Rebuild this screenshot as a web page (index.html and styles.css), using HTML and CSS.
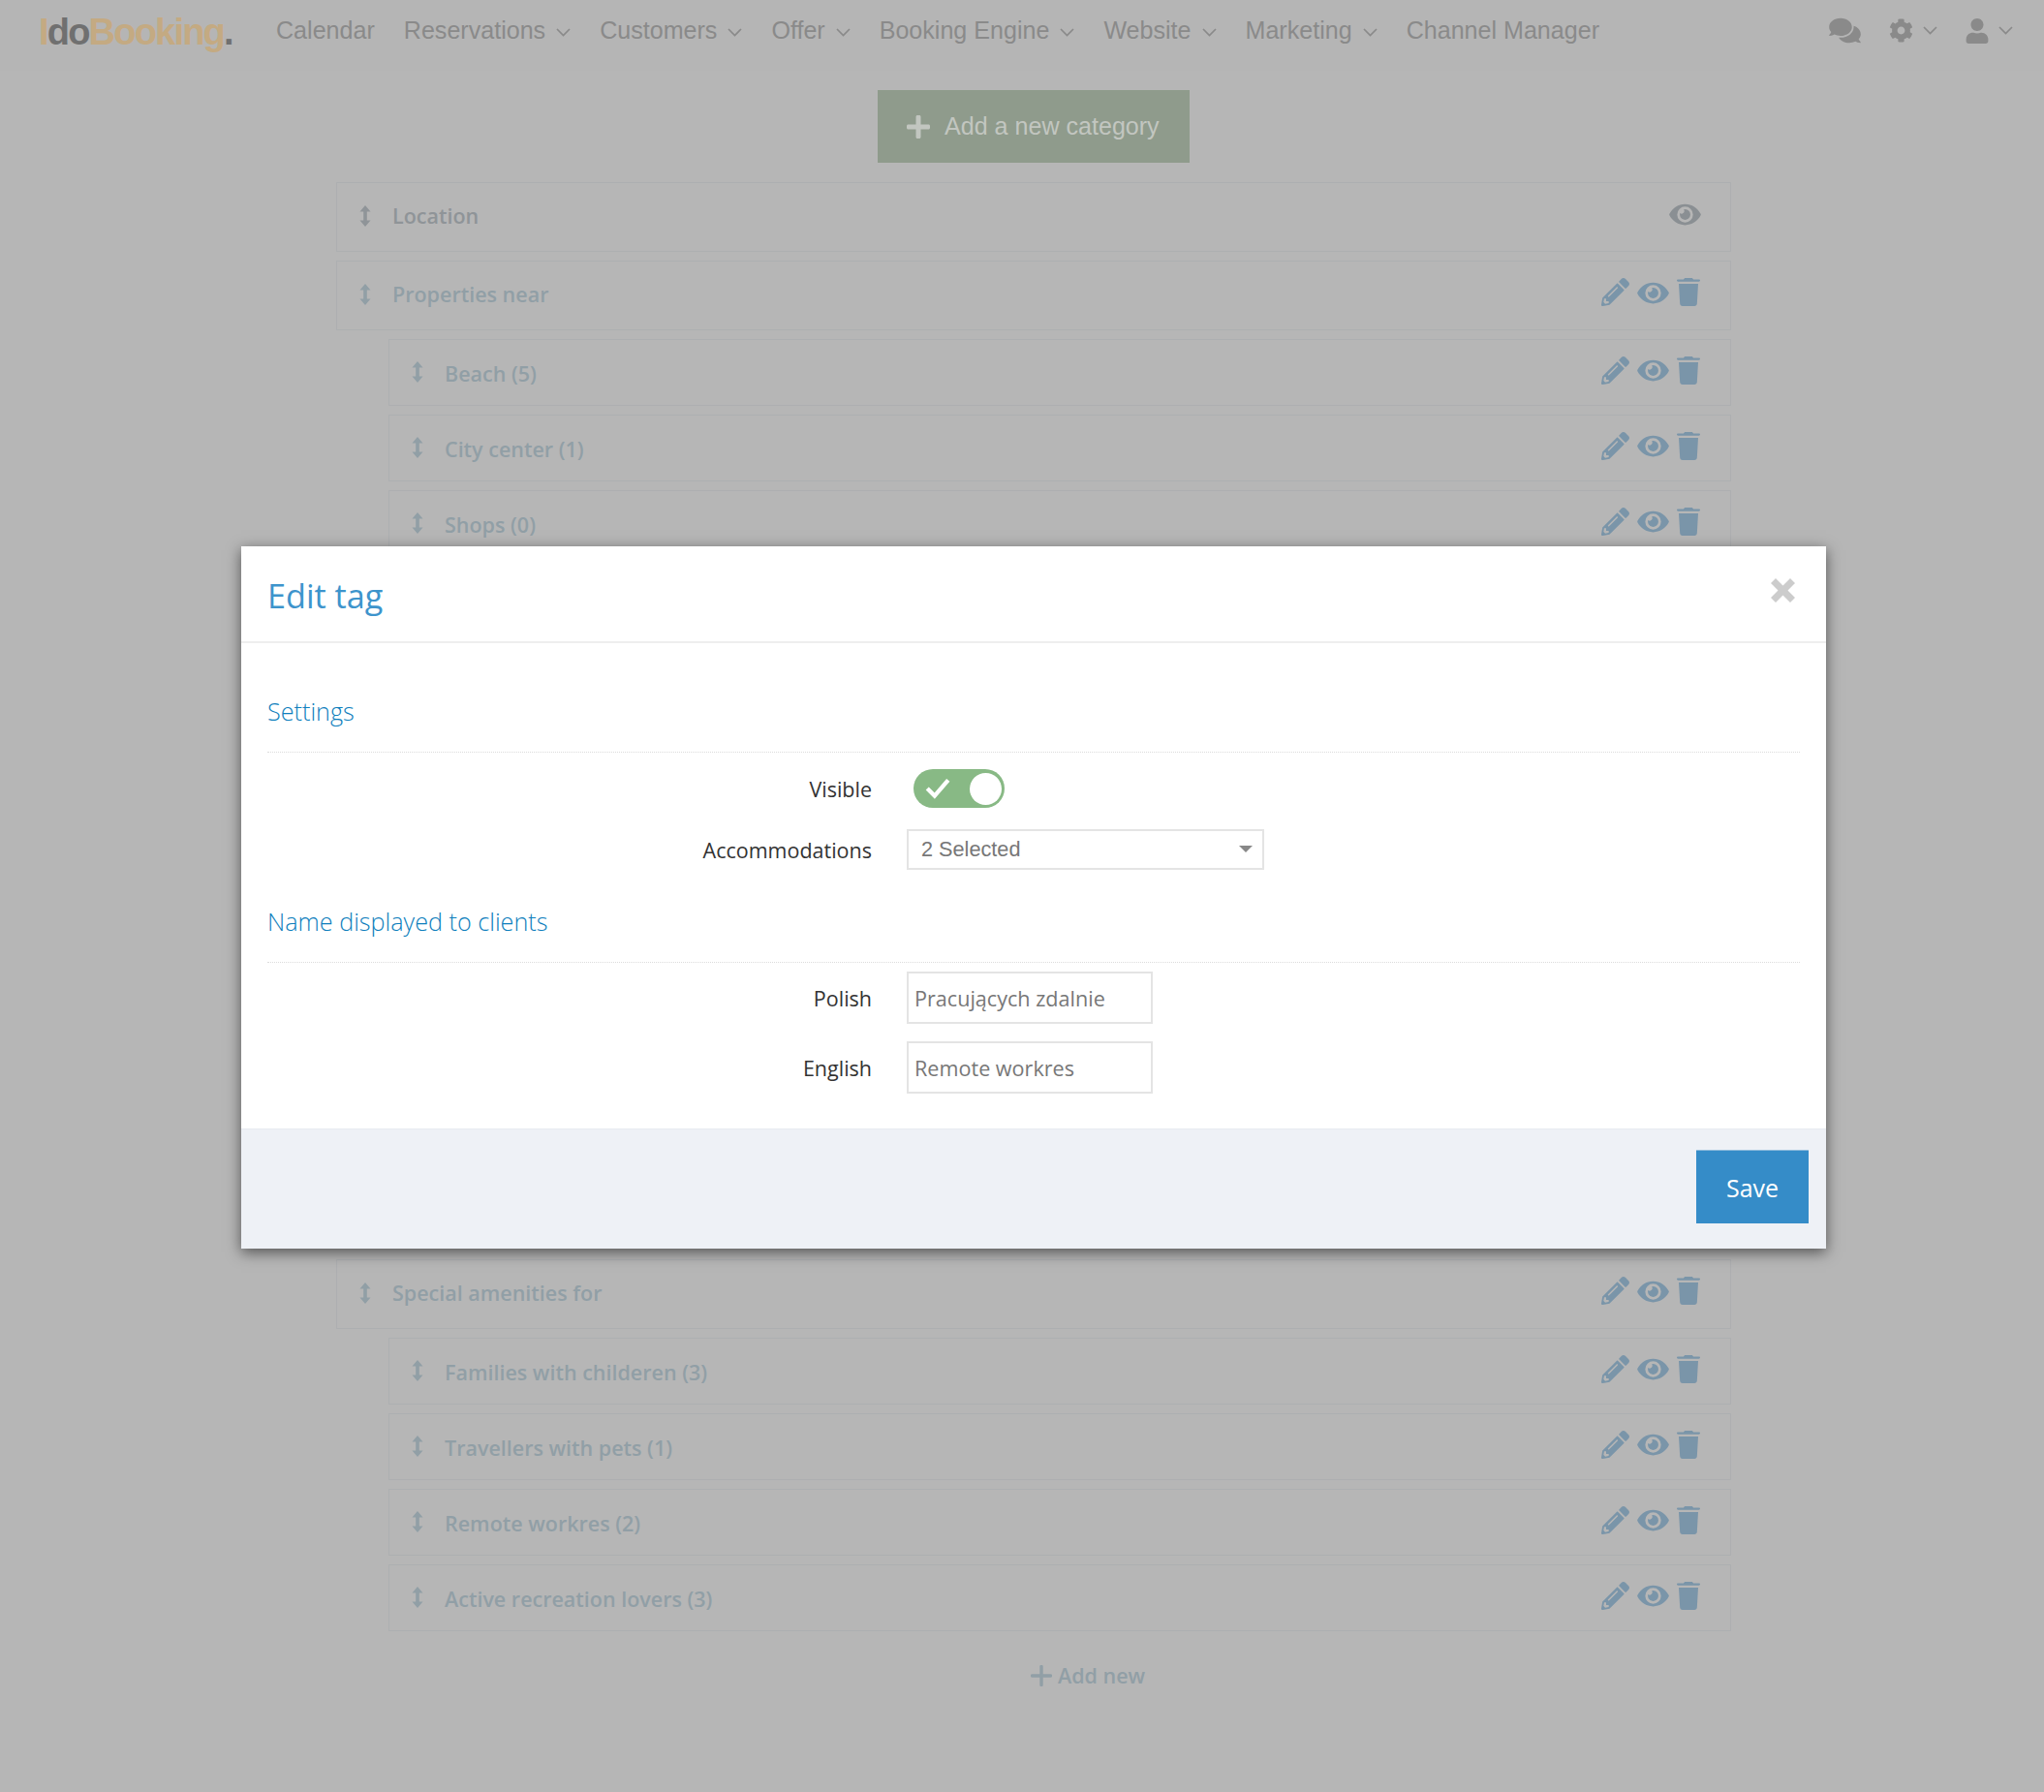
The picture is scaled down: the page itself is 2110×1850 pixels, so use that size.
FILE: index.html
```html
<!DOCTYPE html>
<html>
	<head>
		<meta charset="UTF-8"/>
		<title>IdoBooking - Tags</title>
		<link rel="stylesheet" href="styles.css">
	</head>
	<body>
		<svg class="Sprites" width="0" height="0">
			<symbol id="i-pencil" viewBox="0 0 512 512"><path d="M497.9 142.1l-46.1 46.1c-4.7 4.7-12.3 4.7-17 0l-111-111c-4.7-4.7-4.7-12.3 0-17l46.1-46.1c18.7-18.7 49.1-18.7 67.9 0l60.1 60.1c18.8 18.7 18.8 49.1 0 67.9zM284.2 99.8L21.6 362.4.4 483.9c-2.9 16.4 11.4 30.6 27.8 27.8l121.5-21.3 262.6-262.6c4.7-4.7 4.7-12.3 0-17l-111-111c-4.8-4.7-12.4-4.7-17.1 0zM124.1 339.9c-5.5-5.5-5.5-14.3 0-19.8l154-154c5.5-5.5 14.3-5.5 19.8 0s5.5 14.3 0 19.8l-154 154c-5.5 5.5-14.3 5.5-19.8 0zM88 424h48v36.3l-64.5 11.3-31.1-31.1L51.7 376H88v48z"/></symbol>
			<symbol id="i-eye" viewBox="0 0 576 512"><path d="M572.52 241.4C518.29 135.59 410.93 64 288 64S57.68 135.64 3.48 241.41a32.35 32.35 0 0 0 0 29.19C57.71 376.41 165.07 448 288 448s230.32-71.64 284.52-177.41a32.35 32.35 0 0 0 0-29.19zM288 400a144 144 0 1 1 144-144 143.93 143.93 0 0 1-144 144zm0-240a95.31 95.31 0 0 0-25.31 3.79 47.85 47.85 0 0 1-66.9 66.9A95.78 95.78 0 1 0 288 160z"/></symbol>
			<symbol id="i-trash" viewBox="0 0 24 29"><path d="M9 0h6c1 0 1.700.6 2 1.500h5.800c.7 0 1.200.5 1.200 1.100s-.5 1.100-1.200 1.100H1.200C.5 3.700 0 3.200 0 2.600s.5-1.100 1.200-1.100H7C7.300.6 8 0 9 0zM2 6h20l-1.200 20.500c-.1 1.400-1.200 2.500-2.600 2.500H5.800c-1.400 0-2.500-1.100-2.600-2.500z"/></symbol>
			<symbol id="i-drag" viewBox="0 0 12 22"><path d="M6 0l5.500 6.500H7.800v9h3.700L6 22 .5 15.500h3.700v-9H.5z"/></symbol>
			<symbol id="i-plus" viewBox="0 0 24 24"><path d="M9.500 1.500C9.500.7 10.200 0 11 0h2c.8 0 1.500.7 1.500 1.500v8h8c.8 0 1.500.7 1.500 1.500v2c0 .8-.7 1.500-1.500 1.500h-8v8c0 .8-.7 1.500-1.500 1.500h-2c-.8 0-1.500-.7-1.500-1.500v-8h-8C.7 14.500 0 13.800 0 13v-2c0-.8.7-1.500 1.500-1.500h8z"/></symbol>
			<symbol id="i-plus-thin" viewBox="0 0 22 22"><path d="M11 1.500v19M1.500 11h19" fill="none" stroke="currentColor" stroke-width="3.400" stroke-linecap="round"/></symbol>
			<symbol id="i-chevron" viewBox="0 0 15 9"><path d="M1 1l6.500 6.500L14 1" fill="none" stroke="currentColor" stroke-width="1.700"/></symbol>
			<symbol id="i-comments" viewBox="0 0 576 512"><path d="M416 192c0-88.4-93.1-160-208-160S0 103.6 0 192c0 34.3 14.1 65.9 38 92-13.4 30.2-35.500 54.200-35.800 54.500-2.200 2.300-2.800 5.700-1.500 8.700S4.800 352 8 352c36.600 0 66.900-12.300 88.700-25 32.200 15.700 70.300 25 111.300 25 114.900 0 208-71.600 208-160zm122 220c23.900-26 38-57.700 38-92 0-66.900-53.500-124.200-129.300-148.100.9 6.600 1.300 13.300 1.300 20.100 0 105.900-107.700 192-240 192-10.800 0-21.300-.8-31.700-1.900C207.800 439.600 281.800 480 368 480c41 0 79.100-9.200 111.300-25 21.800 12.700 52.100 25 88.700 25 3.200 0 6.100-1.900 7.300-4.800 1.300-2.900.7-6.300-1.500-8.700-.3-.3-22.400-24.200-35.800-54.500z"/></symbol>
			<symbol id="i-cog" viewBox="0 0 512 512"><path d="M487.4 315.700l-42.600-24.600c4.300-23.200 4.300-47 0-70.200l42.600-24.600c4.900-2.800 7.100-8.600 5.500-14-11.100-35.600-30-67.800-54.700-94.600-3.800-4.100-10-5.100-14.800-2.300L380.800 110c-17.900-15.400-38.500-27.300-60.800-35.100V25.800c0-5.600-3.900-10.500-9.400-11.700-36.700-8.200-74.300-7.800-109.200 0-5.500 1.200-9.400 6.100-9.400 11.700V75c-22.200 7.900-42.800 19.800-60.800 35.100L88.700 85.500c-4.900-2.800-11-1.900-14.800 2.300-24.700 26.700-43.600 58.900-54.700 94.600-1.700 5.400.6 11.200 5.500 14L67.300 221c-4.300 23.200-4.300 47 0 70.200l-42.600 24.600c-4.900 2.800-7.100 8.600-5.500 14 11.100 35.600 30 67.800 54.700 94.600 3.800 4.100 10 5.100 14.800 2.300l42.600-24.600c17.900 15.400 38.500 27.300 60.800 35.100v49.200c0 5.600 3.900 10.500 9.400 11.700 36.700 8.200 74.300 7.800 109.200 0 5.500-1.200 9.400-6.100 9.400-11.700v-49.200c22.200-7.900 42.800-19.800 60.800-35.100l42.600 24.600c4.900 2.800 11 1.900 14.800-2.300 24.700-26.700 43.600-58.900 54.700-94.600 1.500-5.500-.7-11.300-5.600-14.100zM256 336c-44.100 0-80-35.900-80-80s35.900-80 80-80 80 35.900 80 80-35.900 80-80 80z"/></symbol>
			<symbol id="i-user" viewBox="0 0 448 512"><path d="M224 256c70.700 0 128-57.300 128-128S294.700 0 224 0 96 57.300 96 128s57.300 128 128 128zm89.600 32h-16.700c-22.200 10.200-46.900 16-72.900 16s-50.600-5.800-72.900-16h-16.700C60.200 288 0 348.200 0 422.400V464c0 26.500 21.500 48 48 48h352c26.500 0 48-21.500 48-48v-41.600c0-74.200-60.200-134.400-134.400-134.400z"/></symbol>
		</svg>

		<header class="Topbar">
			<a class="Logo">I<span class="LogoDark">do</span>Booking<span class="LogoDark">.</span></a>
			<nav class="Menu">
				<span class="MenuItem">Calendar</span>
				<span class="MenuItem">Reservations <svg class="Chevron"><use href="#i-chevron"/></svg></span>
				<span class="MenuItem">Customers <svg class="Chevron"><use href="#i-chevron"/></svg></span>
				<span class="MenuItem">Offer <svg class="Chevron"><use href="#i-chevron"/></svg></span>
				<span class="MenuItem">Booking Engine <svg class="Chevron"><use href="#i-chevron"/></svg></span>
				<span class="MenuItem">Website <svg class="Chevron"><use href="#i-chevron"/></svg></span>
				<span class="MenuItem">Marketing <svg class="Chevron"><use href="#i-chevron"/></svg></span>
				<span class="MenuItem">Channel Manager</span>
			</nav>
			<div class="TopIcons">
				<svg class="TopComments"><use href="#i-comments"/></svg>
				<span class="TopIcon"><svg class="TopCog"><use href="#i-cog"/></svg><svg class="Chevron"><use href="#i-chevron"/></svg></span>
				<span class="TopIcon"><svg class="TopUser"><use href="#i-user"/></svg><svg class="Chevron"><use href="#i-chevron"/></svg></span>
			</div>
		</header>

		<main class="Content">
			<div class="AddCategory"><span class="AddButton"><svg class="AddPlus"><use href="#i-plus"/></svg>Add a new category</span></div>
			<div class="Rows">
				<div class="Row Main Muted">
					<svg class="Drag"><use href="#i-drag"/></svg><span class="RowName">Location</span>
					<span class="RowIcons"><svg class="IconEye LocationEye"><use href="#i-eye"/></svg></span>
				</div>
				<div class="Row Main">
					<svg class="Drag"><use href="#i-drag"/></svg><span class="RowName">Properties near</span>
					<span class="RowIcons"><svg class="IconPencil"><use href="#i-pencil"/></svg><svg class="IconEye"><use href="#i-eye"/></svg><svg class="IconTrash"><use href="#i-trash"/></svg></span>
				</div>
				<div class="Row Sub">
					<svg class="Drag"><use href="#i-drag"/></svg><span class="RowName">Beach (5)</span>
					<span class="RowIcons"><svg class="IconPencil"><use href="#i-pencil"/></svg><svg class="IconEye"><use href="#i-eye"/></svg><svg class="IconTrash"><use href="#i-trash"/></svg></span>
				</div>
				<div class="Row Sub">
					<svg class="Drag"><use href="#i-drag"/></svg><span class="RowName">City center (1)</span>
					<span class="RowIcons"><svg class="IconPencil"><use href="#i-pencil"/></svg><svg class="IconEye"><use href="#i-eye"/></svg><svg class="IconTrash"><use href="#i-trash"/></svg></span>
				</div>
				<div class="Row Sub">
					<svg class="Drag"><use href="#i-drag"/></svg><span class="RowName">Shops (0)</span>
					<span class="RowIcons"><svg class="IconPencil"><use href="#i-pencil"/></svg><svg class="IconEye"><use href="#i-eye"/></svg><svg class="IconTrash"><use href="#i-trash"/></svg></span>
				</div>
				<div class="Covered"></div>
				<div class="Row Main">
					<svg class="Drag"><use href="#i-drag"/></svg><span class="RowName">Special amenities for</span>
					<span class="RowIcons"><svg class="IconPencil"><use href="#i-pencil"/></svg><svg class="IconEye"><use href="#i-eye"/></svg><svg class="IconTrash"><use href="#i-trash"/></svg></span>
				</div>
				<div class="Row Sub">
					<svg class="Drag"><use href="#i-drag"/></svg><span class="RowName">Families with childeren (3)</span>
					<span class="RowIcons"><svg class="IconPencil"><use href="#i-pencil"/></svg><svg class="IconEye"><use href="#i-eye"/></svg><svg class="IconTrash"><use href="#i-trash"/></svg></span>
				</div>
				<div class="Row Sub">
					<svg class="Drag"><use href="#i-drag"/></svg><span class="RowName">Travellers with pets (1)</span>
					<span class="RowIcons"><svg class="IconPencil"><use href="#i-pencil"/></svg><svg class="IconEye"><use href="#i-eye"/></svg><svg class="IconTrash"><use href="#i-trash"/></svg></span>
				</div>
				<div class="Row Sub">
					<svg class="Drag"><use href="#i-drag"/></svg><span class="RowName">Remote workres (2)</span>
					<span class="RowIcons"><svg class="IconPencil"><use href="#i-pencil"/></svg><svg class="IconEye"><use href="#i-eye"/></svg><svg class="IconTrash"><use href="#i-trash"/></svg></span>
				</div>
				<div class="Row Sub">
					<svg class="Drag"><use href="#i-drag"/></svg><span class="RowName">Active recreation lovers (3)</span>
					<span class="RowIcons"><svg class="IconPencil"><use href="#i-pencil"/></svg><svg class="IconEye"><use href="#i-eye"/></svg><svg class="IconTrash"><use href="#i-trash"/></svg></span>
				</div>
			</div>
			<div class="AddNew"><svg class="AddNewPlus"><use href="#i-plus-thin"/></svg>Add new</div>
		</main>

		<div class="Modal">
			<div class="ModalHead">
				<h2 class="ModalTitle">Edit tag</h2>
				<svg class="ModalClose" viewBox="0 0 25 25"><path d="M5 0l7.500 7.500L20 0l5 5-7.500 7.500L25 20l-5 5-7.500-7.500L5 25l-5-5 7.500-7.500L0 5z"/></svg>
			</div>
			<div class="ModalBody">
				<h3 class="Section">Settings</h3>
				<div class="Field FieldToggle">
					<label class="FieldLabel">Visible</label>
					<div class="Toggle">
						<svg class="ToggleCheck" viewBox="0 0 26 21"><path d="M3 11l7 7L23 3" fill="none" stroke="#fff" stroke-width="4"/></svg>
						<span class="ToggleKnob"></span>
					</div>
				</div>
				<div class="Field FieldSelect">
					<label class="FieldLabel">Accommodations</label>
					<div class="Select">2 Selected<span class="SelectCaret"></span></div>
				</div>
				<h3 class="Section SectionNext">Name displayed to clients</h3>
				<div class="Field FieldPolish">
					<label class="FieldLabel">Polish</label>
					<input class="TextInput" type="text" value="Pracujących zdalnie" readonly>
				</div>
				<div class="Field FieldEnglish">
					<label class="FieldLabel">English</label>
					<input class="TextInput" type="text" value="Remote workres" readonly>
				</div>
			</div>
			<div class="ModalFoot">
				<span class="SaveButton">Save</span>
			</div>
		</div>
	</body>
</html>
```

FILE: styles.css
```css
* {
	margin: 0;
	padding: 0;
	box-sizing: border-box;
}
html, body {
	height: 100%;
}
body {
	position: relative;
	min-height: 1850px;
	overflow: hidden;
	background: #b6b6b6;
	font-family: "Open Sans", sans-serif;
	font-size: 21.5px;
	color: #333;
}
svg {
	display: block;
	fill: currentColor;
}
.Sprites {
	position: absolute;
}

/* top bar */
.Topbar {
	display: flex;
	align-items: center;
	height: 73px;
	padding: 0 0 10px 40px;
	background: #b5b5b5;
	font-family: "Liberation Sans", sans-serif;
	color: #8a8a8a;
}
.Logo {
	width: 245px;
	margin-top: 4px;
	font-size: 38px;
	font-weight: bold;
	letter-spacing: -1.8px;
	color: #c4aa82;
}
.LogoDark {
	color: #707070;
}
.Menu {
	display: flex;
	gap: 30px;
	font-size: 25.08px;
}
.MenuItem {
	display: flex;
	align-items: center;
	gap: 11px;
	white-space: nowrap;
}
.MenuItem .Chevron {
	margin-top: 3px;
}
.Chevron {
	width: 15px;
	height: 9px;
}
.TopIcons {
	display: flex;
	align-items: center;
	margin-left: auto;
	margin-right: 32px;
	gap: 29px;
}
.TopIcon {
	display: flex;
	align-items: center;
	gap: 10px;
}
.TopComments {
	width: 33px;
	height: 29px;
}
.TopCog {
	width: 25px;
	height: 25px;
}
.TopUser {
	width: 24px;
	height: 26px;
}

/* list of tags */
.Content {
	width: 1440px;
	margin-left: 347px;
	font-weight: 600;
}
.AddCategory {
	display: flex;
	justify-content: center;
	margin: 20px 0;
}
.AddButton {
	display: flex;
	align-items: center;
	gap: 15px;
	width: 322px;
	height: 75px;
	padding-left: 30px;
	background: #8f9b8c;
	font-family: "Liberation Sans", sans-serif;
	font-size: 25.08px;
	font-weight: normal;
	color: #c2c6c0;
}
.AddPlus {
	width: 24px;
	height: 24px;
}
.Rows {
	display: flex;
	flex-direction: column;
	gap: 9px;
}
.Row {
	display: flex;
	align-items: center;
	border: 1px solid #adafb1;
	color: #919fa6;
}
.Main {
	height: 72px;
	padding-left: 23px;
}
.Sub {
	height: 69px;
	margin-left: 54px;
	padding-left: 23px;
}
.Muted {
	color: #8f9498;
}
.Drag {
	flex: none;
	width: 12px;
	height: 22px;
	margin-top: -2px;
}
.RowName {
	margin: -4px 0 0 22px;
	white-space: nowrap;
}
.Sub .RowName {
	margin-top: 1px;
}
.RowIcons {
	display: flex;
	align-items: center;
	margin-left: auto;
	margin-right: 31px;
	margin-top: -7px;
	color: #7a95a9;
}
.Sub .RowIcons {
	margin-top: -5px;
}
.IconPencil {
	width: 29px;
	height: 29px;
}
.IconEye {
	width: 33px;
	height: 29px;
	margin: 1px 8px 0;
}
.IconTrash {
	width: 24px;
	height: 29px;
}
.LocationEye {
	color: #8a8f93;
	margin: 2px -1px 0 0;
}
.Covered {
	height: 707px;
}
.AddNew {
	display: flex;
	align-items: center;
	gap: 6px;
	margin-top: 31px;
	padding-left: 717px;
	color: #919fa6;
}
.AddNewPlus {
	width: 22px;
	height: 22px;
}

/* dialog lies over the page */
.Modal {
	position: absolute;
	left: 249px;
	top: 564px;
	width: 1636px;
	height: 725px;
	display: flex;
	flex-direction: column;
	background: #fff;
	box-shadow: 0 4px 14px rgba(0, 0, 0, 0.55);
}
.ModalHead {
	position: relative;
	flex: none;
	height: 100px;
	padding: 27px 27px 0;
	border-bottom: 2px solid #eeeeee;
}
.ModalTitle {
	font-size: 34.2px;
	font-weight: 400;
	line-height: 48px;
	color: #3d94cc;
}
.ModalClose {
	position: absolute;
	top: 33px;
	right: 32px;
	width: 25px;
	height: 25px;
	fill: #cccccc;
}
.ModalBody {
	flex: 1;
	padding: 52px 27px 0;
}
.Section {
	font-size: 25.2px;
	font-weight: 300;
	line-height: 36px;
	padding-bottom: 24px;
	border-bottom: 1px dotted #dcdcdc;
	color: #0f7fbd;
}
.SectionNext {
	margin-top: 35px;
}
.Field {
	display: flex;
	align-items: center;
	gap: 36px;
}
.FieldLabel {
	flex: none;
	width: 624px;
	text-align: right;
	color: #333;
}
.FieldToggle {
	margin-top: 17px;
}
.FieldSelect {
	margin-top: 22px;
}
.FieldPolish {
	margin-top: 9px;
}
.FieldEnglish {
	margin-top: 18px;
}
.Toggle {
	position: relative;
	display: flex;
	align-items: center;
	justify-content: space-between;
	width: 94px;
	height: 40px;
	margin-left: 7px;
	padding: 0 3px 0 11px;
	border-radius: 20px;
	background: #88b985;
}
.ToggleCheck {
	width: 28px;
	height: 23px;
	margin-top: -2px;
}
.ToggleKnob {
	width: 33px;
	height: 33px;
	border-radius: 50%;
	background: #fff;
}
.Select {
	position: relative;
	width: 369px;
	height: 42px;
	padding-left: 13px;
	border: 2px solid #e4e4e4;
	font-family: "Liberation Sans", sans-serif;
	font-size: 21.7px;
	line-height: 37px;
	color: #777;
}
.SelectCaret {
	position: absolute;
	top: 15px;
	right: 10px;
	border-left: 7px solid transparent;
	border-right: 7px solid transparent;
	border-top: 7px solid #888;
}
.TextInput {
	width: 254px;
	height: 54px;
	padding: 0 6px;
	border: 2px solid #e4e4e4;
	border-radius: 0;
	outline: none;
	font-family: "Open Sans", sans-serif;
	font-size: 21.6px;
	color: #777;
}
.ModalFoot {
	flex: none;
	display: flex;
	justify-content: flex-end;
	height: 124px;
	padding: 21px 18px 0 0;
	background: #eef1f6;
	border-top: 1px solid #e8ebf0;
}
.SaveButton {
	display: flex;
	align-items: center;
	justify-content: center;
	width: 116px;
	height: 76px;
	background: #358cc8;
	border-top: 1px solid #8fbbdc;
	font-size: 25px;
	color: #fff;
}
```
